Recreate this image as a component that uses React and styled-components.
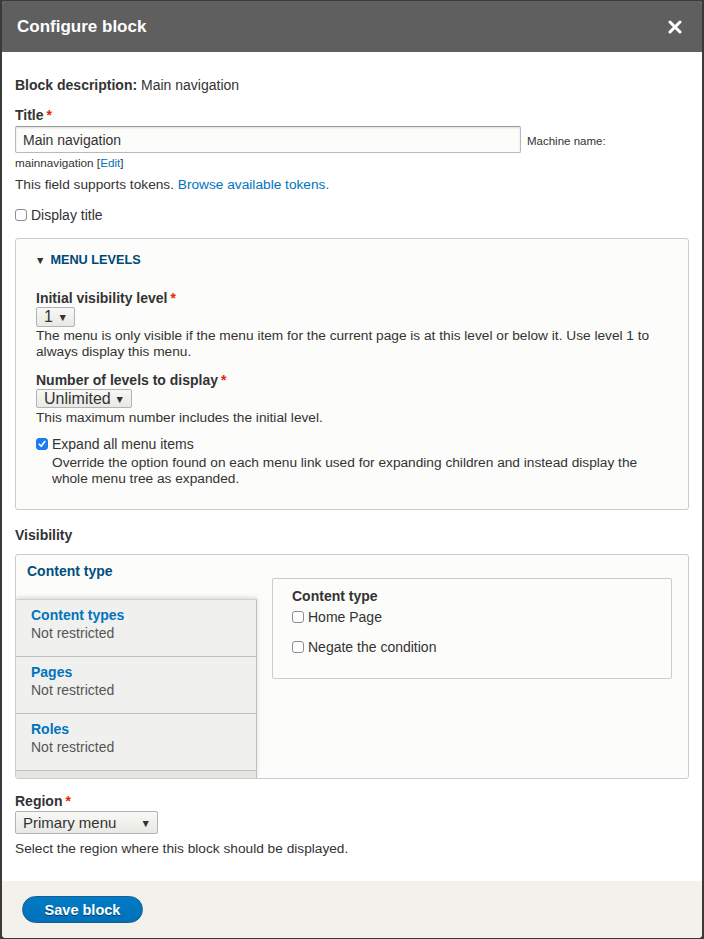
import styled, { createGlobalStyle } from 'styled-components';

const GlobalStyle = createGlobalStyle`
  html, body {
    margin: 0;
    padding: 0;
    background: #3a3a3a;
  }
  body {
    font-family: "Liberation Sans", Arial, sans-serif;
    color: #333;
  }
`;

// --- Dialog frame ---

const Dialog = styled.div`
  margin: 1px 2px;
  height: 937px;
  display: flex;
  flex-direction: column;
  background: #fff;
  border-radius: 4px;
  overflow: hidden;
`;

const Header = styled.header`
  flex: none;
  height: 51px;
  background: #5f5f5f;
  display: flex;
  align-items: center;
  justify-content: space-between;
  padding: 0 20px 0 15px;
`;

const DialogTitle = styled.h2`
  margin: 0;
  color: #fff;
  font-size: 17px;
  font-weight: 700;
`;

const CloseButton = styled.button`
  width: 14px;
  height: 14px;
  padding: 0;
  border: 0;
  background: none;
  display: flex;
  cursor: pointer;
`;

const Content = styled.main`
  flex: 1;
  padding: 24px 13px 0;
  overflow: hidden;
`;

const Footer = styled.footer`
  flex: none;
  height: 57px;
  box-sizing: border-box;
  background: #f2f1eb;
  padding: 15px 20px 0;
`;

// --- Form parts ---

const Line = styled.div`
  font-size: 14px;
  line-height: 18px;
  margin-top: ${(p) => p.$mt || 0}px;
`;

const Label = styled.div`
  font-size: 14px;
  font-weight: 700;
  line-height: 18px;
  margin-top: ${(p) => p.$mt || 0}px;
  margin-bottom: ${(p) => p.$mb || 0}px;
`;

const Required = styled.span`
  color: #e62600;
  margin-left: 3px;
`;

const Description = styled.div`
  font-size: 13.7px;
  line-height: 16px;
  color: #333;
  margin-top: ${(p) => p.$mt || 0}px;
  padding-left: ${(p) => p.$indent || 0}px;
`;

const Small = styled.div`
  font-size: 11.7px;
  line-height: 16px;
  margin-top: 2px;
`;

const Link = styled.a`
  color: #0074bd;
  text-decoration: none;
`;

const InputRow = styled.div`
  display: flex;
  align-items: center;
  gap: 6px;
  margin-top: 2px;
`;

const TextInput = styled.input`
  width: 506px;
  height: 27px;
  box-sizing: border-box;
  border: 1px solid #b8b8b8;
  border-top-color: #999;
  border-radius: 2px;
  background: #fcfcfa;
  box-shadow: inset 0 1px 2px rgba(0, 0, 0, 0.12);
  padding: 0 7px;
  font-family: inherit;
  font-size: 14px;
  color: #333;
`;

const MachineName = styled.span`
  font-size: 11.5px;
  margin-top: 2px;
`;

const Check = styled.label`
  display: flex;
  align-items: center;
  gap: 4px;
  font-size: 14px;
  line-height: 18px;
  margin-top: ${(p) => p.$mt || 0}px;
`;

const Box = styled.span`
  width: 12px;
  height: 12px;
  box-sizing: border-box;
  border-radius: 3px;
  border: 1px solid ${(p) => (p.$checked ? '#1a7ae8' : '#8d8d8d')};
  background: ${(p) => (p.$checked ? '#1f7cf0' : '#fff')};
  display: flex;
  align-items: center;
  justify-content: center;
  flex: none;
`;

const Select = styled.div`
  display: inline-flex;
  align-items: center;
  justify-content: space-between;
  box-sizing: border-box;
  width: ${(p) => p.$w}px;
  height: ${(p) => p.$h || 20}px;
  padding: 0 6px 0 7px;
  border: 1px solid #b3b3b3;
  border-radius: 2px;
  background: linear-gradient(#f8f8f6, #e8e8e4);
  font-size: ${(p) => p.$fs || 16}px;
  color: #333;
`;

const Arrow = styled.span`
  font-size: 10.5px;
  color: #333;
`;

// --- Details ---

const Details = styled.section`
  margin-top: 14px;
  border: 1px solid #ccc;
  border-radius: 3px;
  background: #fcfcfa;
  height: 272px;
  box-sizing: border-box;
`;

const Summary = styled.div`
  padding: 12px 19px 0;
  font-size: 12.7px;
  line-height: 18px;
  font-weight: 700;
  text-transform: uppercase;
  color: #004875;
  display: flex;
  align-items: center;
  gap: 5px;
`;

const DetailsBody = styled.div`
  padding: 20px 20px 0;
`;

// --- Vertical tabs ---

const Tabs = styled.div`
  margin-top: 10px;
  height: 225px;
  box-sizing: border-box;
  border: 1px solid #ccc;
  border-radius: 3px;
  background: #fcfcfa;
  display: grid;
  grid-template-columns: 241px 1fr;
  overflow: hidden;
`;

const TabMenu = styled.div`
  display: flex;
  flex-direction: column;
`;

const ActiveTab = styled.div`
  height: 44px;
  padding: 7px 11px 0;
  box-sizing: border-box;
  font-size: 14px;
  font-weight: 700;
  line-height: 18px;
  color: #004f80;
`;

const TabList = styled.div`
  flex: 1;
  background: #e6e5e1;
  border-right: 1px solid #bfbfbf;
  border-top: 1px solid #d0d0d0;
  box-shadow: 0 -2px 4px rgba(0, 0, 0, 0.12);
`;

const TabItem = styled.div`
  height: 57px;
  box-sizing: border-box;
  padding: 6px 15px 0;
  background: #f0f0ee;
  border-bottom: 1px solid #bfbfbf;
`;

const TabTitle = styled.div`
  font-size: 14px;
  font-weight: 700;
  line-height: 18px;
  color: #0074bd;
`;

const TabSummary = styled.div`
  font-size: 14px;
  line-height: 18px;
  color: #555;
`;

const Pane = styled.div`
  padding: 23px 16px 0 15px;
`;

const Fieldset = styled.div`
  height: 101px;
  box-sizing: border-box;
  border: 1px solid #ccc;
  border-radius: 2px;
  padding: 8px 19px 0;
`;

const SaveButton = styled.button`
  height: 27px;
  width: 121px;
  border-radius: 20px;
  border: 1px solid #1e5c90;
  background: linear-gradient(#007bc6, #0071b8);
  color: #fff;
  font-family: inherit;
  font-size: 14.5px;
  font-weight: 700;
  text-shadow: 0 1px 0 rgba(0, 0, 0, 0.5);
  padding: 0;
  cursor: pointer;
`;

function Checkbox({ checked, children, mt }) {
  return (
    <Check $mt={mt}>
      <Box $checked={checked}>
        {checked && (
          <svg width="8" height="8" viewBox="0 0 8 8">
            <path d="M1.2 4.3 L3.2 6.3 L6.8 1.5" stroke="#fff" strokeWidth="1.6" fill="none" strokeLinecap="round" strokeLinejoin="round" />
          </svg>
        )}
      </Box>
      {children}
    </Check>
  );
}

const tabs = [
  { title: 'Content types', summary: 'Not restricted' },
  { title: 'Pages', summary: 'Not restricted' },
  { title: 'Roles', summary: 'Not restricted' },
];

export default function App() {
  return (
    <>
      <GlobalStyle />
      <Dialog>
        <Header>
          <DialogTitle>Configure block</DialogTitle>
          <CloseButton aria-label="Close">
            <svg width="14" height="14" viewBox="0 0 14 14">
              <path d="M2 2 L12 12 M12 2 L2 12" stroke="#fff" strokeWidth="3" strokeLinecap="round" />
            </svg>
          </CloseButton>
        </Header>

        <Content>
          <Line>
            <b>Block description:</b> Main navigation
          </Line>

          <Label $mt={12}>
            Title<Required>*</Required>
          </Label>
          <InputRow>
            <TextInput defaultValue="Main navigation" />
            <MachineName>Machine name:</MachineName>
          </InputRow>
          <Small>
            mainnavigation [<Link href="#">Edit</Link>]
          </Small>
          <Description $mt={6}>
            This field supports tokens. <Link href="#">Browse available tokens.</Link>
          </Description>

          <Checkbox mt={13}>Display title</Checkbox>

          <Details>
            <Summary>
              <Arrow>▼</Arrow>Menu levels
            </Summary>
            <DetailsBody>
              <Label>
                Initial visibility level<Required>*</Required>
              </Label>
              <Select $w={39} $h={20}>
                1 <Arrow>▼</Arrow>
              </Select>
              <Description $mt={1}>
                The menu is only visible if the menu item for the current page is at this level or below it. Use level 1 to
                always display this menu.
              </Description>

              <Label $mt={11}>
                Number of levels to display<Required>*</Required>
              </Label>
              <Select $w={96} $h={19}>
                Unlimited <Arrow>▼</Arrow>
              </Select>
              <Description $mt={2}>This maximum number includes the initial level.</Description>

              <Checkbox checked mt={9}>Expand all menu items</Checkbox>
              <Description $mt={2} $indent={16}>
                Override the option found on each menu link used for expanding children and instead display the
                whole menu tree as expanded.
              </Description>
            </DetailsBody>
          </Details>

          <Label $mt={16}>Visibility</Label>
          <Tabs>
            <TabMenu>
              <ActiveTab>Content type</ActiveTab>
              <TabList>
                {tabs.map((t) => (
                  <TabItem key={t.title}>
                    <TabTitle>{t.title}</TabTitle>
                    <TabSummary>{t.summary}</TabSummary>
                  </TabItem>
                ))}
              </TabList>
            </TabMenu>
            <Pane>
              <Fieldset>
                <Label>Content type</Label>
                <Checkbox mt={3}>Home Page</Checkbox>
                <Checkbox mt={12}>Negate the condition</Checkbox>
              </Fieldset>
            </Pane>
          </Tabs>

          <Label $mt={13} $mb={1}>
            Region<Required>*</Required>
          </Label>
          <Select $w={143} $h={23} $fs={15}>
            Primary menu <Arrow>▼</Arrow>
          </Select>
          <Description $mt={7}>Select the region where this block should be displayed.</Description>
        </Content>

        <Footer>
          <SaveButton>Save block</SaveButton>
        </Footer>
      </Dialog>
    </>
  );
}
